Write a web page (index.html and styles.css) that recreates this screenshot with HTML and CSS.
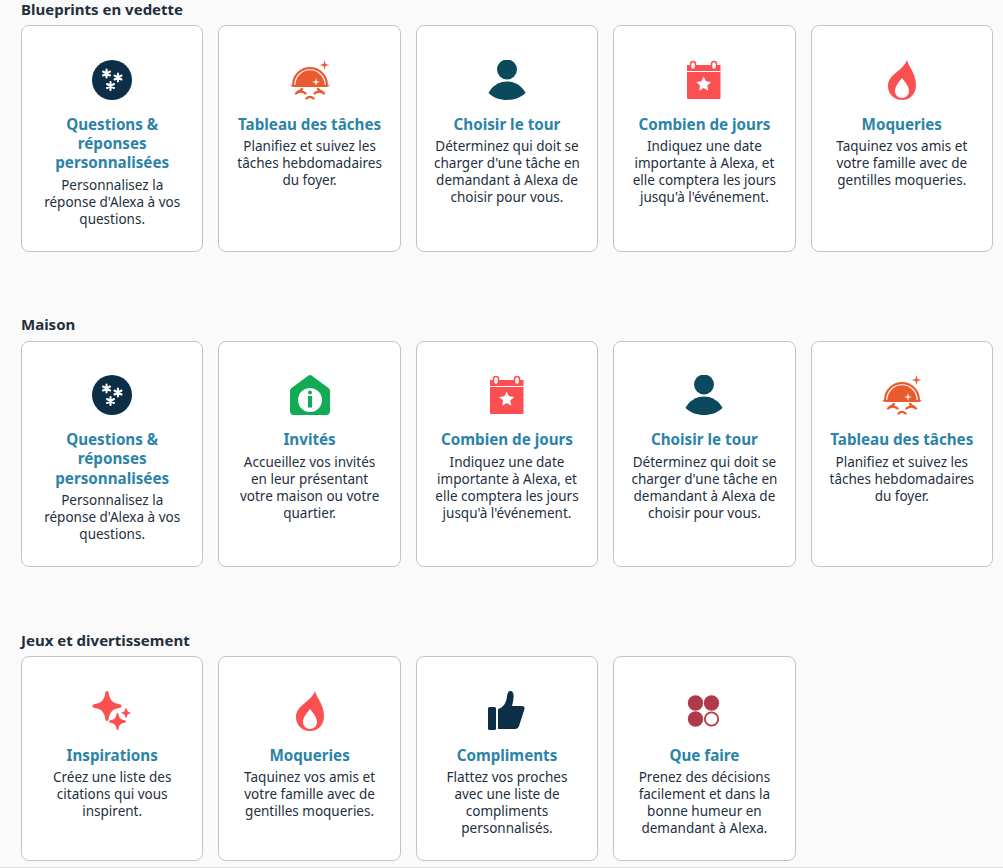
FILE: index.html
```html
<!DOCTYPE html>
<html lang="fr">
  <head>
    <meta charset="UTF-8" />
    <meta name="viewport" content="width=device-width, initial-scale=1.0" />
    <link rel="stylesheet" href="styles.css">
    <title>Blueprints</title>
  </head>
  <body>
    <svg class="sprites" width="0" height="0" aria-hidden="true">
      <symbol id="i-qa" viewBox="0 0 40 40">
        <circle cx="20" cy="20" r="20" fill="#0c2f47" />
        <g stroke="#fff" stroke-width="2.100" stroke-linecap="round">
          <path d="M14.500 9.500v8M11 11.500l7 4M11 15.500l7-4" />
          <path d="M26 13.500v8M22.500 15.500l7 4M22.500 19.500l7-4" />
          <path d="M18.500 22v8M15 24l7 4M15 28l7-4" />
        </g>
      </symbol>
      <symbol id="i-chores" viewBox="0 0 40 40">
        <path fill="#ea5a2f" d="M34.500 0l1 4 4 1-4 1-1 4-1-4-4-1 4-1z" />
        <path fill="#ea5a2f" d="M2 25a18 18 0 0 1 36 0l2 .5-3 1.500H3l-3-1.500z" />
        <path fill="none" stroke="#fff" stroke-width="1.100" d="M4.800 25a15.200 15.200 0 0 1 30.400 0" />
        <path fill="#fff" d="M26 18l.8 3.200 3.200.8-3.200.8-.8 3.200-.8-3.200-3.200-.8 3.200-.8z" />
        <g fill="none" stroke="#ea5a2f" stroke-width="2.400" stroke-linecap="round">
          <path d="M6 33.500c2.500-2.500 7-2.500 9.500 0M12 29c-1 1.500-2.500 2.500-4.500 3" />
          <path d="M34 33.500c-2.500-2.500-7-2.500-9.500 0M28 29c1 1.500 2.500 2.500 4.500 3" />
          <path d="M16.500 38.500c2-2 5-2 7 0" />
        </g>
      </symbol>
      <symbol id="i-person" viewBox="0 0 40 40">
        <circle cx="20" cy="9.500" r="10" fill="#0b4a5c" />
        <path fill="#0b4a5c" d="M1.500 33C5 26 12 21.500 20 21.500S35 26 38.500 33C33 38 27 40 20 40S7 38 1.500 33z" />
      </symbol>
      <symbol id="i-calendar" viewBox="0 0 40 40">
        <path fill="#fc4f52" d="M3 5h33.500v33a1 1 0 0 1-1 1H4a1 1 0 0 1-1-1z" />
        <path stroke="#fff" stroke-width="1" d="M3 11.500h33.500" />
        <rect x="6.500" y="1.500" width="5" height="8" rx="2.500" fill="#fff" stroke="#fc4f52" stroke-width="1.500" />
        <rect x="27.500" y="1.500" width="5" height="8" rx="2.500" fill="#fff" stroke="#fc4f52" stroke-width="1.500" />
        <path fill="#fff" d="M19.700 16.500l2.200 4.800 5.300.6-3.900 3.600 1 5.200-4.600-2.600-4.600 2.600 1-5.200-3.900-3.600 5.300-.6z" />
      </symbol>
      <symbol id="i-flame" viewBox="0 0 40 40">
        <path fill-rule="evenodd" fill="#fc4f52" d="M25 0c1 6 9 13 9 25 0 9-6 15-14 15S6 34 6 26C6 14 21 11 25 0zM20 18c-3 4-7 8-7 13 0 4 3 7 7 7s7-3 7-7c0-5-4-9-7-13z" />
      </symbol>
      <symbol id="i-home" viewBox="0 0 40 40">
        <path fill="#12ab55" d="M18.500.600a2.500 2.500 0 0 1 3 0L38.500 13a3.500 3.500 0 0 1 1.500 3v20a4 4 0 0 1-4 4H4a4 4 0 0 1-4-4V16a3.500 3.500 0 0 1 1.500-3z" />
        <circle cx="20" cy="25" r="12" fill="#fff" />
        <circle cx="20" cy="17.500" r="2" fill="#12ab55" />
        <rect x="18" y="21" width="4" height="11.500" fill="#12ab55" />
      </symbol>
      <symbol id="i-sparkle" viewBox="0 0 40 40">
        <g fill="#fc4f52">
          <path d="M15 0c1 0 1.500 1 1.700 2 .7 6 3.300 10 10.300 11 1.800.3 2.500 1 2.500 2s-.7 1.700-2.500 2c-7 1-9.600 5-10.300 11-.2 1-.7 2-1.700 2s-1.500-1-1.700-2C12.600 22 10 18 3 17c-1.800-.3-2.500-1-2.500-2s.7-1.700 2.500-2c7-1 9.600-5 10.300-11 .2-1 .7-2 1.700-2z" />
          <path d="M25.500 22c.7 0 .9.600 1 1.300.5 3.500 2 5.300 6 6 1 .2 1.500.6 1.500 1.200s-.5 1-1.500 1.200c-4 .7-5.500 2.500-6 6-.1.700-.3 1.300-1 1.300s-.9-.6-1-1.300c-.5-3.500-2-5.300-6-6-1-.2-1.500-.6-1.500-1.200s.5-1 1.500-1.200c4-.7 5.500-2.500 6-6 .1-.7.300-1.300 1-1.300z" />
          <path d="M34 17c.4 0 .6.400.7 1 .3 2 1.300 3 3.300 3.400.6.100 1 .3 1 .6s-.4.500-1 .6c-2 .4-3 1.400-3.300 3.400-.1.600-.3 1-.7 1s-.6-.4-.7-1c-.3-2-1.300-3-3.300-3.400-.6-.1-1-.3-1-.6s.4-.5 1-.6c2-.4 3-1.400 3.300-3.400.1-.6.300-1 .7-1z" />
        </g>
      </symbol>
      <symbol id="i-thumb" viewBox="0 0 40 40">
        <g fill="#0c2f47">
          <rect x="1" y="16" width="8" height="23" rx="1.500" />
          <path d="M11 18c5-1 8-6 9-12 .3-3 1-6 3.500-6 2.500 0 3.500 3 3 7-.3 3-1 6-1.500 8h10c2 0 3 1.500 2.500 3L32 35c-.5 2-2 3-4 3H11z" />
        </g>
      </symbol>
      <symbol id="i-choice" viewBox="0 0 40 40">
        <g fill="#b03a4a">
          <circle cx="11.500" cy="12" r="7.700" />
          <circle cx="27.500" cy="12" r="7.700" />
          <circle cx="11.500" cy="28" r="7.700" />
        </g>
        <circle cx="27.500" cy="28" r="6.700" fill="none" stroke="#b03a4a" stroke-width="1.800" />
      </symbol>
    </svg>

    <div class="wrapper">
      <section class="group">
        <h2 class="group__title">Blueprints en vedette</h2>
        <div class="cards">
          <a class="card" href="#">
            <svg class="card__icon"><use href="#i-qa" /></svg>
            <h3 class="card__title">Questions &amp; réponses personnalisées</h3>
            <p class="card__text">Personnalisez la réponse d'Alexa à vos questions.</p>
          </a>
          <a class="card" href="#">
            <svg class="card__icon"><use href="#i-chores" /></svg>
            <h3 class="card__title">Tableau des tâches</h3>
            <p class="card__text">Planifiez et suivez les tâches hebdomadaires du foyer.</p>
          </a>
          <a class="card" href="#">
            <svg class="card__icon"><use href="#i-person" /></svg>
            <h3 class="card__title">Choisir le tour</h3>
            <p class="card__text">Déterminez qui doit se charger d'une tâche en demandant à Alexa de choisir pour vous.</p>
          </a>
          <a class="card" href="#">
            <svg class="card__icon"><use href="#i-calendar" /></svg>
            <h3 class="card__title">Combien de jours</h3>
            <p class="card__text">Indiquez une date importante à Alexa, et elle comptera les jours jusqu'à l'événement.</p>
          </a>
          <a class="card" href="#">
            <svg class="card__icon"><use href="#i-flame" /></svg>
            <h3 class="card__title">Moqueries</h3>
            <p class="card__text">Taquinez vos amis et votre famille avec de gentilles moqueries.</p>
          </a>
        </div>
      </section>

      <section class="group">
        <h2 class="group__title">Maison</h2>
        <div class="cards">
          <a class="card" href="#">
            <svg class="card__icon"><use href="#i-qa" /></svg>
            <h3 class="card__title">Questions &amp; réponses personnalisées</h3>
            <p class="card__text">Personnalisez la réponse d'Alexa à vos questions.</p>
          </a>
          <a class="card" href="#">
            <svg class="card__icon"><use href="#i-home" /></svg>
            <h3 class="card__title">Invités</h3>
            <p class="card__text">Accueillez vos invités en leur présentant votre maison ou votre quartier.</p>
          </a>
          <a class="card" href="#">
            <svg class="card__icon"><use href="#i-calendar" /></svg>
            <h3 class="card__title">Combien de jours</h3>
            <p class="card__text">Indiquez une date importante à Alexa, et elle comptera les jours jusqu'à l'événement.</p>
          </a>
          <a class="card" href="#">
            <svg class="card__icon"><use href="#i-person" /></svg>
            <h3 class="card__title">Choisir le tour</h3>
            <p class="card__text">Déterminez qui doit se charger d'une tâche en demandant à Alexa de choisir pour vous.</p>
          </a>
          <a class="card" href="#">
            <svg class="card__icon"><use href="#i-chores" /></svg>
            <h3 class="card__title">Tableau des tâches</h3>
            <p class="card__text">Planifiez et suivez les tâches hebdomadaires du foyer.</p>
          </a>
        </div>
      </section>

      <section class="group">
        <h2 class="group__title">Jeux et divertissement</h2>
        <div class="cards">
          <a class="card" href="#">
            <svg class="card__icon"><use href="#i-sparkle" /></svg>
            <h3 class="card__title">Inspirations</h3>
            <p class="card__text">Créez une liste des citations qui vous inspirent.</p>
          </a>
          <a class="card" href="#">
            <svg class="card__icon"><use href="#i-flame" /></svg>
            <h3 class="card__title">Moqueries</h3>
            <p class="card__text">Taquinez vos amis et votre famille avec de gentilles moqueries.</p>
          </a>
          <a class="card" href="#">
            <svg class="card__icon"><use href="#i-thumb" /></svg>
            <h3 class="card__title">Compliments</h3>
            <p class="card__text">Flattez vos proches avec une liste de compliments personnalisés.</p>
          </a>
          <a class="card" href="#">
            <svg class="card__icon"><use href="#i-choice" /></svg>
            <h3 class="card__title">Que faire</h3>
            <p class="card__text">Prenez des décisions facilement et dans la bonne humeur en demandant à Alexa.</p>
          </a>
        </div>
      </section>
      <hr class="divider" />
    </div>
  </body>
</html>
```

FILE: styles.css
```css
*,
*::after,
*::before {
  box-sizing: border-box;
  margin: 0;
  padding: 0;
}

a {
  color: inherit;
  text-decoration: none;
}

body {
  background: #fafafa;
  color: #232f3e;
  font-family: "Noto Sans", sans-serif;
}

.sprites {
  position: absolute;
}

.wrapper {
  padding: 0 10px 0 21px;
}

.group {
  margin-bottom: 63.8px;
}

.group:last-of-type {
  margin-bottom: 0;
}

.group__title {
  font-size: 15px;
  line-height: 18px;
  font-weight: 700;
  margin-bottom: 7.3px;
}

.cards {
  display: grid;
  grid-template-columns: repeat(5, 1fr);
  gap: 15px;
}

.card {
  display: flex;
  flex-direction: column;
  align-items: center;
  text-align: center;
  background: #fff;
  border: 1px solid #c4c4c4;
  border-radius: 8px;
  padding: 33.7px 15px 23px;
}

.card__icon {
  width: 40px;
  height: 40px;
  margin-bottom: 14.9px;
}

.card__title {
  font-size: 15.2px;
  line-height: 19.2px;
  font-weight: 700;
  color: #2b83a8;
  margin-bottom: 4.1px;
}

.card__text {
  font-size: 13.5px;
  line-height: 17px;
}

.divider {
  border: 0;
  border-top: 1px solid #ddd;
  margin: 6px 0 0 -21px;
  width: 1003px;
}
```
